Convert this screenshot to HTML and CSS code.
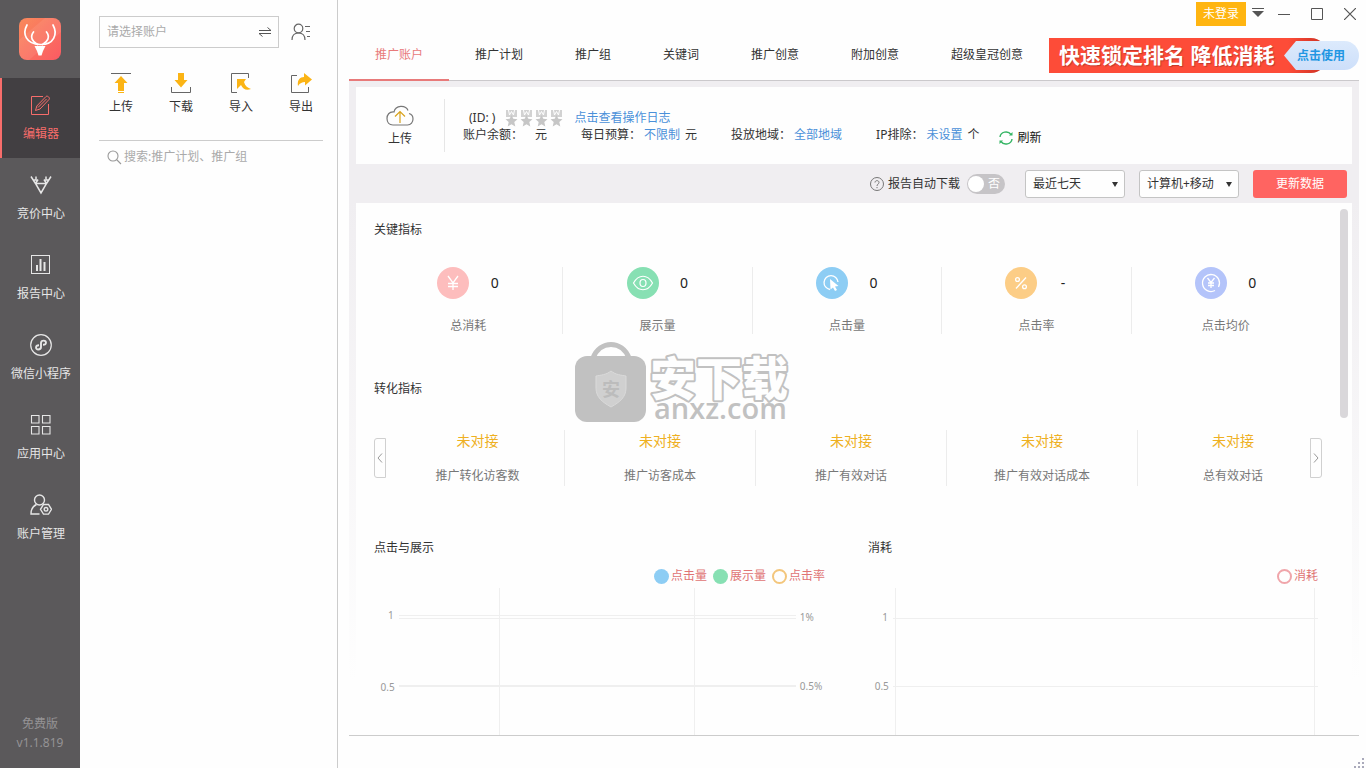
FILE: index.html
```html
<!DOCTYPE html>
<html lang="zh-CN">
<head>
<meta charset="utf-8">
<title>推广账户</title>
<link rel="stylesheet" href="styles.css">
</head>
<body>
<div class="app">
  <nav class="sidebar">
    <div class="logo">
      <svg width="42" height="42" viewBox="0 0 42 42" aria-label="logo">
        <defs>
          <linearGradient id="logoFill" x1="0" y1="0" x2="1" y2="1">
            <stop offset="0" stop-color="#f98a5c"/><stop offset="1" stop-color="#fb5a63"/>
          </linearGradient>
        </defs>
        <rect width="42" height="42" rx="8" fill="url(#logoFill)"/>
        <path d="M0 22 26 0h8a8 8 0 0 1 8 8v6L10 42H8a8 8 0 0 1-8-8z" fill="#fff" opacity=".08"/>
        <g fill="none" stroke="#fff" stroke-width="1.700" stroke-linecap="round">
          <path d="M8 7C3 16 7 26 21 26.500S39 16 34 7"/>
          <path d="M14.500 14c-4 5-1 10 4 12.500M27.500 14c4 5 1 10-4 12.500"/>
        </g>
        <path d="M15.500 28h11l-2.500 5-1.500 4.500h-3L18 33z" fill="#fff"/>
      </svg>
    </div>
    <a class="nav-item active" href="#">
      <svg width="22" height="22" viewBox="0 0 22 22" fill="none" stroke="currentColor" stroke-width="1">
        <path d="M13 2.500H1.500v18h17V10"/><path d="M5.500 16.500l1.300-4.500L16 2.500c1.500-1.300 4.500 1.500 3 3L10 15z"/><path d="M8 13.500l8.500-8.500"/>
      </svg>
      <span>编辑器</span>
    </a>
    <a class="nav-item" href="#">
      <svg width="22" height="22" viewBox="0 0 22 22" fill="none" stroke="currentColor" stroke-width="1.500">
        <path d="M5.500 9.500h11L11 19zM5.500 9.500L1 2.500M3 6h3V2.500M16.500 9.500L21 2.500M19 6h-3V2.500M5.500 9.500L8 5.500M16.500 9.500L14 5.500"/>
      </svg>
      <span>竞价中心</span>
    </a>
    <a class="nav-item" href="#">
      <svg width="22" height="22" viewBox="0 0 22 22" fill="none" stroke="currentColor">
        <rect x="1.500" y="1.500" width="18" height="18"/><path d="M7 17v-6M10.500 17V5M14.500 17V8" stroke-width="2"/>
      </svg>
      <span>报告中心</span>
    </a>
    <a class="nav-item" href="#">
      <svg width="22" height="22" viewBox="0 0 22 22" fill="none" stroke="currentColor" stroke-width="1.200">
        <circle cx="11" cy="11" r="10.300"/>
        <path d="M9 11.300c-4 0-3.600 4.200-.8 4.200 1.600 0 2.800-1 2.800-2.400V9c0-1.400 1.200-2.400 2.800-2.400 2.800 0 3.200 4.200-.8 4.200" stroke-width="1.900"/>
      </svg>
      <span>微信小程序</span>
    </a>
    <a class="nav-item" href="#">
      <svg width="22" height="22" viewBox="0 0 22 22" fill="none" stroke="currentColor" stroke-width="1.100">
        <path d="M1.500 1.500h7.500v7.500H1.500zM12.500 1.500H20v7.500h-7.500zM1.500 12.500h7.500V20H1.500zM12.500 12.500H20V20h-7.500z"/>
      </svg>
      <span>应用中心</span>
    </a>
    <a class="nav-item" href="#">
      <svg width="22" height="22" viewBox="0 0 22 22" fill="none" stroke="currentColor" stroke-width="1.400">
        <circle cx="9.500" cy="6" r="5"/><path d="M6.500 10.500C3 12 1 15.500 1 20h8.500"/>
        <path d="M13.500 10.500h5l3 4.800-3 4.800h-5l-3-4.800z"/><circle cx="16" cy="15.300" r="1.800"/>
      </svg>
      <span>账户管理</span>
    </a>
    <div class="version"><span>免费版</span><span>v1.1.819</span></div>
  </nav>

  <aside class="accounts">
    <div class="picker">
      <div class="picker-box">
        <input type="text" placeholder="请选择账户" aria-label="请选择账户">
        <button type="button" aria-label="切换">
          <svg width="12" height="10" viewBox="0 0 12 10" fill="none" stroke="#555" stroke-width="1"><path d="M0 3.500h12L8.500 .5M12 6.500H0l3.500 3"/></svg>
        </button>
      </div>
      <button type="button" aria-label="账户列表">
        <svg width="20" height="18" viewBox="0 0 20 18" fill="none" stroke="#666" stroke-width="1.200"><circle cx="7.500" cy="5.500" r="4.300"/><path d="M1 17c0-4.500 2.500-7 6.500-7s6.500 2.500 6.500 7M14 3.500h5M15 8.500h4M16 13.500h3"/></svg>
      </button>
    </div>
    <div class="actions">
      <button type="button">
        <svg width="22" height="22" viewBox="0 0 22 22"><path d="M1 1.500h20" stroke="#666"/><path d="M11 4l6.500 7H14v8H8v-8H4.500z" fill="#fbb415"/><path d="M8 20.500h6" stroke="#fbb415"/></svg>
        <span>上传</span>
      </button>
      <button type="button">
        <svg width="22" height="22" viewBox="0 0 22 22"><path d="M1.500 15v5.500h19V15" fill="none" stroke="#666"/><path d="M8 1h6v7h3.500L11 15.500 4.500 8H8z" fill="#fbb415"/></svg>
        <span>下载</span>
      </button>
      <button type="button">
        <svg width="22" height="22" viewBox="0 0 22 22"><path d="M18.500 6V1.500h-17v19H7" fill="none" stroke="#666"/><path d="M7 7h9l-2 3c1 4 4 6 7 7-5 2-8 0-10-4l-4 4z" fill="#fbb415"/></svg>
        <span>导入</span>
      </button>
      <button type="button">
        <svg width="22" height="22" viewBox="0 0 22 22"><path d="M7 3.500H1.500v17h17V15" fill="none" stroke="#666"/><path d="M14 1l8 6.500-7 6v-3.500c-3 0-5 1-7 4-1-6 2-9 6-9z" fill="#fbb415"/></svg>
        <span>导出</span>
      </button>
    </div>
    <label class="search">
      <svg width="15" height="15" viewBox="0 0 15 15" fill="none" stroke="#999" stroke-width="1.100"><circle cx="6" cy="6" r="5"/><path d="M9.500 9.500l4.500 4.500"/></svg>
      <input type="text" placeholder="搜索:推广计划、推广组" aria-label="搜索">
    </label>
  </aside>

  <main class="main">
    <header class="titlebar">
      <button type="button" class="login">未登录</button>
      <div class="window-controls">
        <button type="button" aria-label="菜单"><svg width="12" height="12" viewBox="0 0 12 12"><path d="M0 .5h12" stroke="#555"/><path d="M0 3h12L6 9z" fill="#555"/></svg></button>
        <button type="button" aria-label="最小化"><svg width="12" height="12" viewBox="0 0 12 12"><path d="M0 6.500h12" stroke="#555"/></svg></button>
        <button type="button" aria-label="最大化"><svg width="12" height="12" viewBox="0 0 12 12"><path d="M.5 .5h11v11H.5z" fill="none" stroke="#555"/></svg></button>
        <button type="button" aria-label="关闭"><svg width="12" height="12" viewBox="0 0 12 12"><path d="M0 0l12 12M12 0L0 12" stroke="#555" stroke-width="1.200"/></svg></button>
      </div>
    </header>

    <div class="tabs">
      <a class="tab selected" href="#">推广账户</a>
      <a class="tab" href="#">推广计划</a>
      <a class="tab" href="#">推广组</a>
      <a class="tab" href="#">关键词</a>
      <a class="tab" href="#">推广创意</a>
      <a class="tab" href="#">附加创意</a>
      <a class="tab" href="#">超级皇冠创意</a>
      <a class="banner" href="#">
        <span class="banner-text">快速锁定排名 降低消耗</span>
        <span class="banner-cta">点击使用</span>
      </a>
    </div>

    <div class="content">
      <section class="info">
        <button type="button" class="cloud">
          <svg width="28" height="22" viewBox="0 0 28 22" fill="none" stroke-width="1.200"><path d="M22 5.500C20 0 9.500-.5 8 7 3 6.500 1 10 1 13.500 1 17 3 20 7 20h14.500C25 20 27 17 27 14s-2-5-4-5.500" stroke="#777"/><path d="M14 18V7M9 11.500L14 6.500l5 5" stroke="#d8a21c"/></svg>
          <span>上传</span>
        </button>
        <div class="details">
          <div class="line">
            <span class="id">(ID: )</span>
            <svg class="medals" width="58" height="17" viewBox="0 0 58 17">
              <defs><g id="medal"><path d="M1 0h11v7H1z" fill="#d2d2d2"/><path d="M3.500 0l1 5 2-3.500 2 3.500 1-5" fill="none" stroke="#fff"/><path d="M6.500 5l1.800 3.800 4.200.4-3.200 2.800 1 4.500-3.800-2.300-3.800 2.300 1-4.500L.5 9.200l4.200-.4z" fill="#c6c6c6"/></g></defs>
              <use href="#medal"/><use href="#medal" x="15"/><use href="#medal" x="30"/><use href="#medal" x="45"/>
            </svg>
            <a href="#">点击查看操作日志</a>
          </div>
          <div class="line stats">
            <span class="balance">账户余额：<span class="unit">元</span></span>
            <span>每日预算：<a href="#">不限制</a>元</span>
            <span>投放地域：<a href="#">全部地域</a></span>
            <span>IP排除：<a href="#">未设置</a>个</span>
          </div>
        </div>
        <button type="button" class="refresh">
          <svg width="14" height="14" viewBox="0 0 14 14" fill="none" stroke="#35b564" stroke-width="1.400"><path d="M1 6a6 5.500 0 0 1 11-2.500M13 8a6 5.500 0 0 1-11 2.500"/><path d="M10 4.500h3.500V1zM4 9.500H.5V13z" fill="#35b564" stroke="none"/></svg>
          刷新
        </button>
      </section>

      <div class="toolbar">
        <label class="auto">
          <svg width="14" height="14" viewBox="0 0 14 14" fill="none" stroke="#777"><circle cx="7" cy="7" r="6.500"/><path d="M5 5.500C5 3 9 3 9 5.500 9 7 7 7 7 9M7 10v1.200"/></svg>
          <span>报告自动下载</span>
          <input type="checkbox">
          <span class="switch">否</span>
        </label>
        <span class="select"><select aria-label="时间范围"><option>最近七天</option></select></span>
        <span class="select"><select aria-label="设备"><option>计算机+移动</option></select></span>
        <button type="button" class="update">更新数据</button>
      </div>

      <section class="board">
        <div class="scrollbar"></div>
        <h2>关键指标</h2>
        <div class="metrics">
          <div class="metric">
            <div class="metric-top">
              <svg width="32" height="32" viewBox="0 0 32 32" fill="none" stroke="#fff" stroke-width="1.300"><circle cx="16" cy="16" r="16" fill="#fdbdbd" stroke="none"/><path d="M11 9l5 7 5-7M16 16v7M11 16.500h10M11 19.500h10"/></svg>
              <strong>0</strong>
            </div>
            <span>总消耗</span>
          </div>
          <div class="metric">
            <div class="metric-top">
              <svg width="32" height="32" viewBox="0 0 32 32" fill="none" stroke="#fff" stroke-width="1.200"><circle cx="16" cy="16" r="16" fill="#87e0b3" stroke="none"/><path d="M6.500 16c5-9 14-9 19 0-5 9-14 9-19 0z"/><ellipse cx="16" cy="16" rx="3" ry="3.500"/></svg>
              <strong>0</strong>
            </div>
            <span>展示量</span>
          </div>
          <div class="metric">
            <div class="metric-top">
              <svg width="32" height="32" viewBox="0 0 32 32" fill="none" stroke="#fff" stroke-width="1.300"><circle cx="16" cy="16" r="16" fill="#8dcdf4" stroke="none"/><path d="M14 22.500A7 7 0 1 1 22 15"/><path d="M14 12l8.500 7-3.500.5 2 3.500-2 1-2-3.500-2.500 2z" fill="#fff" stroke="none"/></svg>
              <strong>0</strong>
            </div>
            <span>点击量</span>
          </div>
          <div class="metric">
            <div class="metric-top">
              <svg width="32" height="32" viewBox="0 0 32 32" fill="none" stroke="#fff" stroke-width="1.300"><circle cx="16" cy="16" r="16" fill="#fccd86" stroke="none"/><circle cx="12.500" cy="12.500" r="1.900"/><circle cx="19.500" cy="19.800" r="1.900"/><path d="M21 10.500L11 21.500"/></svg>
              <strong>-</strong>
            </div>
            <span>点击率</span>
          </div>
          <div class="metric">
            <div class="metric-top">
              <svg width="32" height="32" viewBox="0 0 32 32" fill="none" stroke="#fff" stroke-width="1.300"><circle cx="16" cy="16" r="16" fill="#b4c4fa" stroke="none"/><path d="M20 23.500A8.500 8.500 0 1 1 23.500 20"/><path d="M12.500 11l3.500 4.500 3.500-4.500M16 15.500V21M13 16h6M13 18.500h6"/></svg>
              <strong>0</strong>
            </div>
            <span>点击均价</span>
          </div>
        </div>

        <h2>转化指标</h2>
        <div class="carousel">
          <button type="button" class="arrow prev" aria-label="上一页"><svg width="6" height="10" viewBox="0 0 6 10" fill="none" stroke="#999"><path d="M5 .5L1 5l4 4.500"/></svg></button>
          <div class="conversions">
            <div class="conversion first"><b>未对接</b><span>推广转化访客数</span></div>
            <div class="conversion"><b>未对接</b><span>推广访客成本</span></div>
            <div class="conversion"><b>未对接</b><span>推广有效对话</span></div>
            <div class="conversion"><b>未对接</b><span>推广有效对话成本</span></div>
            <div class="conversion"><b>未对接</b><span>总有效对话</span></div>
          </div>
          <button type="button" class="arrow next" aria-label="下一页"><svg width="6" height="10" viewBox="0 0 6 10" fill="none" stroke="#999"><path d="M1 .5L5 5 1 9.500"/></svg></button>
        </div>

        <div class="charts">
          <div class="chart">
            <h2>点击与展示</h2>
            <div class="legend wide">
              <span><i class="dot blue"></i>点击量</span>
              <span><i class="dot green"></i>展示量</span>
              <span><i class="dot ring-orange"></i>点击率</span>
            </div>
            <svg class="plot" width="100%" height="100%">
              <g stroke="#efefef" shape-rendering="crispEdges">
                <line x1="25.400%" x2="25.400%" y1="0" y2="100%"/><line x1="64.900%" x2="64.900%" y1="0" y2="100%"/>
                <line x1="5%" x2="85.500%" y1="27" y2="27"/><line x1="5%" x2="85.500%" y1="30" y2="30"/>
                <line x1="5%" x2="85.500%" y1="98" y2="98" stroke-width="2"/>
              </g>
              <g fill="#999" font-size="10">
                <text x="4%" y="31" text-anchor="end">1</text><text x="4.200%" y="103" text-anchor="end">0.5</text>
                <text x="86.200%" y="33">1%</text><text x="86.200%" y="102">0.5%</text>
              </g>
            </svg>
          </div>
          <div class="chart">
            <h2>消耗</h2>
            <div class="legend"><span><i class="dot ring-pink"></i>消耗</span></div>
            <svg class="plot" width="100%" height="100%">
              <g stroke="#efefef" shape-rendering="crispEdges">
                <line x1="6.100%" x2="6.100%" y1="0" y2="100%"/><line x1="98.800%" x2="98.800%" y1="0" y2="100%"/>
                <line x1="5.500%" x2="99.600%" y1="30" y2="30"/><line x1="5.500%" x2="99.600%" y1="98" y2="98"/>
              </g>
              <g fill="#999" font-size="10">
                <text x="4.400%" y="33" text-anchor="end">1</text><text x="4.600%" y="102" text-anchor="end">0.5</text>
              </g>
            </svg>
          </div>
        </div>

        <svg class="watermark" width="220" height="84" viewBox="0 0 220 84">
          <path d="M18 16C25-2 47-2 54 16" fill="none" stroke="#c1c1c1" stroke-width="5"/>
          <rect y="14" width="71" height="66" rx="12" fill="#c1c1c1"/>
          <path d="M36 29c5 4 10 4 15 5v12c0 9-6 14-15 19-9-5-15-10-15-19V34c5-1 10-1 15-5z" fill="#d0d0d0" stroke="#dadada"/>
          <text x="36" y="54" text-anchor="middle" class="wm-badge">安</text>
          <text x="75" y="53" class="wm-name">安下载</text>
          <text x="79" y="77" class="wm-site">anxz.com</text>
        </svg>
      </section>
    </div>
    <footer class="statusbar">
      <svg width="12" height="12" viewBox="0 0 12 12" stroke="#aab" stroke-dasharray="2 2" stroke-width="2"><path d="M0 11h12M4 7h8M8 3h4" fill="none"/></svg>
    </footer>
  </main>
</div>
</body>
</html>
```

FILE: styles.css
```css
* { box-sizing: border-box; }
body {
  margin: 0;
  font: 12px/16px "Noto Sans", "Noto Sans CJK SC", sans-serif;
  color: #333;
  background: #fefefe;
}
button, input, select { font: inherit; color: inherit; }
button { padding: 0; border: 0; background: none; cursor: pointer; }
a { color: #4a90d9; text-decoration: none; }
svg { display: block; flex: none; }
h2 { margin: 0; font-size: 12px; line-height: 16px; font-weight: 400; }

.app { display: flex; height: 100vh; overflow: hidden; }

/* Sidebar */
.sidebar { width: 80px; flex: none; display: flex; flex-direction: column; background: #5b595b; }
.logo { height: 78px; display: flex; align-items: center; justify-content: center; }
.nav-item {
  height: 80px; padding-top: 16px;
  display: flex; flex-direction: column; align-items: center; gap: 10px;
  color: #e6e6e6; border-left: 2px solid transparent;
}
.nav-item.active { background: #423f42; color: #f76d6b; border-left-color: #f76d6b; }
.version {
  margin-top: auto; padding-bottom: 17px;
  display: flex; flex-direction: column; align-items: center; gap: 3px; color: #959395;
}

/* Account column */
.accounts { width: 258px; flex: none; padding: 16px 14px 0 19px; border-right: 1px solid #ccc; }
.picker { display: flex; align-items: center; gap: 12px; }
.picker-box { width: 180px; height: 32px; display: flex; align-items: center; padding: 0 7px; border: 1px solid #ccc; }
.picker-box input { flex: 1; min-width: 0; padding: 0; border: 0; background: none; }
input::placeholder { color: #aaa; opacity: 1; }
.actions { display: flex; margin: 24px -8px 0; }
.actions button { flex: 1; display: flex; flex-direction: column; align-items: center; gap: 5px; }
.search { display: flex; align-items: center; gap: 2px; margin-top: 25px; padding: 8px 8px; border-top: 1px solid #ccc; }
.search input { flex: 1; min-width: 0; height: 16px; padding: 0; border: 0; background: none; }

/* Main column */
.main { flex: 1; min-width: 0; display: flex; flex-direction: column; padding-left: 11px; }
.titlebar { height: 28px; display: flex; align-items: center; justify-content: flex-end; padding-right: 10px; gap: 6px; }
.login { width: 50px; height: 24px; background: #ffb511; color: #fff; }
.window-controls { display: flex; align-items: center; }
.window-controls button { margin-left: 21px; }
.window-controls button:first-child { margin-left: 0; }
.window-controls button:nth-child(2) { margin-left: 14px; }
.tabs { height: 53px; margin-right: 7px; display: flex; align-items: stretch; border-bottom: 1px solid #cbc9cc; white-space: nowrap; }
.tab { padding: 0 26px; line-height: 54px; color: #333; }
.tab.selected { color: #e87a7a; margin-bottom: -1px; border-bottom: 2px solid #e87a7a; }
.banner { flex: 1; height: 35px; margin-top: 10px; position: relative; display: flex; align-items: center; justify-content: space-between; }
.banner::before { content: ""; position: absolute; inset: 0 32px 0 0; background: linear-gradient(90deg, #fd4c38 86%, #c92f22); border-radius: 0 16px 16px 0; }
.banner-text { position: relative; padding-left: 10px; font-size: 21px; line-height: 35px; font-weight: 700; color: #fff; text-shadow: 1px 1px 1px #c2392b; }
.banner-cta {
  position: relative; width: 75px; height: 29px; padding-left: 13px; line-height: 29px;
  font-weight: 700; color: #2196e3; background: linear-gradient(#dceafc, #cddffa);
  border-radius: 0 15px 15px 0; clip-path: polygon(0 50%, 12px 0, 100% 0, 100% 100%, 12px 100%);
}

.content {
  flex: 1; min-height: 0; margin-right: 7px; padding: 6px 7px 0;
  display: flex; flex-direction: column;
  background: linear-gradient(#f0eef1 120px, #fefefe 600px);
  border-bottom: 1px solid #ccc;
}
.info { height: 77px; flex: none; display: flex; align-items: center; background: #fefefe; white-space: nowrap; }
.cloud { width: 89px; height: 53px; display: flex; flex-direction: column; align-items: center; justify-content: center; gap: 4px; border-right: 1px solid #e6e6e6; }
.details { margin: 2px 0 0 18px; }
.line { display: flex; align-items: center; height: 17px; }
.id { padding: 0 10px 0 6px; }
.medals { margin-right: 11px; }
.stats a { margin: 0 5px 0 3px; }
.stats > span { margin-right: 34px; }
.stats > span:nth-child(3) { margin-right: 29px; }
.stats > span:last-child { margin-right: 20px; }
.unit { margin-left: 12px; }
.refresh { display: flex; align-items: center; gap: 4px; padding-top: 24px; color: #111; }

.toolbar { height: 39px; flex: none; display: flex; align-items: center; justify-content: flex-end; gap: 14px; padding: 1px 5px 0; }
.auto { display: flex; align-items: center; gap: 4px; margin-right: 6px; position: relative; }
.auto input { position: absolute; right: 0; width: 38px; height: 20px; margin: 0; opacity: 0; }
.switch { width: 38px; height: 20px; margin-left: 3px; padding-right: 5px; position: relative; border-radius: 10px; background: #c6c4c7; color: #fff; line-height: 20px; text-align: right; }
.switch::before { content: ""; position: absolute; left: 1px; top: 2px; width: 16px; height: 16px; border-radius: 50%; background: #fff; }
.select { position: relative; }
.select select { display: block; width: 100px; height: 28px; padding: 0 7px; appearance: none; background: #fefefe; border: 1px solid #c4c4c4; border-radius: 3px; }
.select::after { content: ""; position: absolute; right: 7px; top: 12px; border: 3px solid transparent; border-top: 5px solid #333; border-bottom: 0; pointer-events: none; }
.update { width: 94px; height: 28px; border-radius: 3px; background: #ff6461; color: #fff; }

/* Board */
.board { flex: 1; min-height: 0; position: relative; display: flex; flex-direction: column; padding: 19px 32px 0 18px; background: #fefefe; }
.scrollbar { position: absolute; right: 4px; top: 6px; width: 8px; height: 209px; border-radius: 4px; background: #d9d7da; }
.metrics { display: flex; margin-top: 29px; }
.metric { flex: 1; height: 67px; display: flex; flex-direction: column; align-items: center; justify-content: space-between; color: #777; }
.metric + .metric, .conversion + .conversion { border-left: 1px solid #ececec; }
.metric-top { display: flex; align-items: center; gap: 21px; }
.metric strong { min-width: 9px; font-size: 14px; line-height: 16px; font-weight: 400; color: #222; text-align: center; }
.metrics + h2 { margin-top: 47px; }
.carousel { position: relative; margin-top: 33px; }
.conversions { display: flex; margin: 0 -8px 0 17px; }
.conversion { flex: 191; height: 56px; padding-top: 3px; display: flex; flex-direction: column; align-items: center; gap: 19px; color: #777; white-space: nowrap; }
.conversion.first { flex: 174; }
.conversion b { font-size: 14px; line-height: 16px; font-weight: 400; color: #eeb022; }
.arrow { position: absolute; top: 8px; width: 12px; height: 40px; display: flex; align-items: center; justify-content: center; border: 1px solid #d0d0d0; background: #fefefe; }
.prev { left: 0; border-radius: 3px 0 0 3px; }
.next { right: -2px; border-radius: 0 3px 3px 0; }

.charts { flex: 1; min-height: 0; display: grid; grid-template-columns: 494fr 452fr; margin-top: 54px; }
.chart { min-width: 0; min-height: 0; display: flex; flex-direction: column; }
.legend { display: flex; justify-content: flex-end; gap: 6px; margin: 12px 2px 4px 0; color: #e07474; }
.legend.wide { margin-right: 43px; }
.legend span { display: flex; align-items: center; gap: 2px; }
.dot { width: 15px; height: 15px; border-radius: 50%; }
.blue { background: #8dcdf4; }
.green { background: #87e0b3; }
.ring-orange { border: 2px solid #f3c67c; }
.ring-pink { border: 2px solid #f0a5aa; }
.plot { flex: 1; min-height: 0; }

.watermark { position: absolute; left: 219px; top: 139px; pointer-events: none; }
.wm-badge { font-size: 18px; font-weight: 700; fill: #bcbcbc; }
.wm-name { font-size: 46px; font-weight: 900; fill: #fefefe; stroke: #c1c1c1; stroke-width: 4px; stroke-linejoin: round; paint-order: stroke; }
.wm-site { font-family: "Open Sans", sans-serif; font-size: 29px; font-weight: 600; fill: #c1c1c1; }

.statusbar { height: 32px; flex: none; display: flex; align-items: flex-end; justify-content: flex-end; }
```
